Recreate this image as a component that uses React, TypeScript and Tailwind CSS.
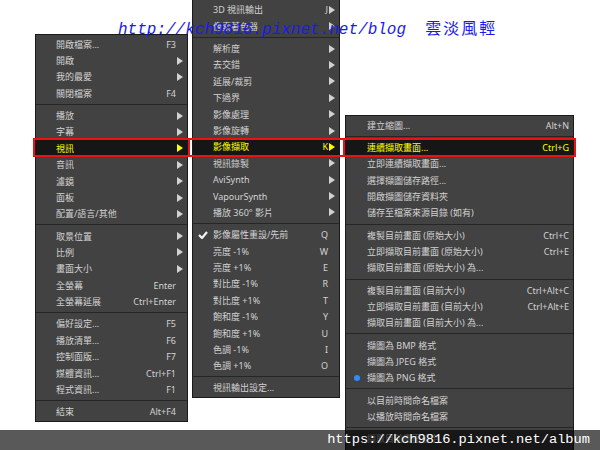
import clsx from 'clsx';

type Row =
    | { sep: true }
    | { sep?: false; label: string; sc?: string; arrow?: boolean; hl?: boolean; check?: boolean; dot?: boolean };

const leftRows: Row[] = [
    { label: '開啟檔案...', sc: 'F3' },
    { label: '開啟', arrow: true },
    { label: '我的最愛', arrow: true },
    { label: '關閉檔案', sc: 'F4' },
    { sep: true },
    { label: '播放', arrow: true },
    { label: '字幕', arrow: true },
    { label: '視訊', arrow: true, hl: true },
    { label: '音訊', arrow: true },
    { label: '濾鏡', arrow: true },
    { label: '面板', arrow: true },
    { label: '配置/語言/其他', arrow: true },
    { sep: true },
    { label: '取景位置', arrow: true },
    { label: '比例', arrow: true },
    { label: '畫面大小', arrow: true },
    { label: '全螢幕', sc: 'Enter' },
    { label: '全螢幕延展', sc: 'Ctrl+Enter' },
    { sep: true },
    { label: '偏好設定...', sc: 'F5' },
    { label: '播放清單...', sc: 'F6' },
    { label: '控制面版...', sc: 'F7' },
    { label: '媒體資訊...', sc: 'Ctrl+F1' },
    { label: '程式資訊...', sc: 'F1' },
    { sep: true },
    { label: '結束', sc: 'Alt+F4' },
];

const midRows: Row[] = [
    { label: '3D 視訊輸出', sc: 'J', arrow: true },
    { label: '像素著色器', arrow: true },
    { sep: true },
    { label: '解析度', arrow: true },
    { label: '去交錯', arrow: true },
    { label: '延展/裁剪', arrow: true },
    { label: '下過界', arrow: true },
    { label: '影像處理', arrow: true },
    { label: '影像旋轉', arrow: true },
    { label: '影像擷取', sc: 'K', arrow: true, hl: true },
    { label: '視訊錄製', arrow: true },
    { label: 'AviSynth', arrow: true },
    { label: 'VapourSynth', arrow: true },
    { label: '播放 360° 影片', arrow: true },
    { sep: true },
    { label: '影像屬性重設/先前', sc: 'Q', check: true },
    { label: '亮度 -1%', sc: 'W' },
    { label: '亮度 +1%', sc: 'E' },
    { label: '對比度 -1%', sc: 'R' },
    { label: '對比度 +1%', sc: 'T' },
    { label: '飽和度 -1%', sc: 'Y' },
    { label: '飽和度 +1%', sc: 'U' },
    { label: '色調 -1%', sc: 'I' },
    { label: '色調 +1%', sc: 'O' },
    { sep: true },
    { label: '視訊輸出設定...' },
];

const rightRows: Row[] = [
    { label: '建立縮圖...', sc: 'Alt+N' },
    { sep: true },
    { label: '連續擷取畫面...', sc: 'Ctrl+G', hl: true },
    { label: '立即連續擷取畫面...' },
    { label: '選擇擷圖儲存路徑...' },
    { label: '開啟擷圖儲存資料夾' },
    { label: '儲存至檔案來源目錄 (如有)' },
    { sep: true },
    { label: '複製目前畫面 (原始大小)', sc: 'Ctrl+C' },
    { label: '立即擷取目前畫面 (原始大小)', sc: 'Ctrl+E' },
    { label: '擷取目前畫面 (原始大小) 為...' },
    { sep: true },
    { label: '複製目前畫面 (目前大小)', sc: 'Ctrl+Alt+C' },
    { label: '立即擷取目前畫面 (目前大小)', sc: 'Ctrl+Alt+E' },
    { label: '擷取目前畫面 (目前大小) 為...' },
    { sep: true },
    { label: '擷圖為 BMP 格式' },
    { label: '擷圖為 JPEG 格式' },
    { label: '擷圖為 PNG 格式', dot: true },
    { sep: true },
    { label: '以目前時間命名檔案' },
    { label: '以播放時間命名檔案' },
    { sep: true },
    { label: '擷取目前畫面設定...' },
    { label: '擷圖格式與品質...' },
];

const Arrow = () => (
    <svg width="6" height="8" viewBox="0 0 6 8">
        <path d="M0 0L6 4L0 8Z" fill="currentColor" />
    </svg>
);

const Menu = ({ rows, arrows, className, leftCol }: { rows: Row[]; arrows: boolean; className: string; leftCol: string }) => (
    <div className={clsx('shrink-0 bg-[#424242] border border-[#1b1b1b] py-[1px]', className)}>
        {rows.map((r, i) =>
            r.sep ? (
                <div key={i} className="h-[5.8px] flex items-center">
                    <div className="w-full h-px bg-[#262626]" />
                </div>
            ) : (
                <div
                    key={i}
                    className={clsx(
                        'flex items-center h-[16.4px] leading-none whitespace-nowrap',
                        r.hl ? 'bg-[#161616] text-[#ffff00]' : 'text-[#d2d2d2]'
                    )}
                >
                    <span className={clsx('flex justify-center items-center', leftCol)}>
                        {r.check && (
                            <svg width="10" height="8" viewBox="0 0 10 8">
                                <path d="M1 4l3 3 5-6" stroke="#f2f2f2" strokeWidth="2.2" fill="none" />
                            </svg>
                        )}
                        {r.dot && <span className="w-[6px] h-[6px] rounded-full bg-[#2f8cff]" />}
                    </span>
                    <span className="flex-1">{r.label}</span>
                    {r.sc && <span>{r.sc}</span>}
                    {arrows ? (
                        <span className="w-[11px] flex items-center pl-[1px]">{r.arrow && <Arrow />}</span>
                    ) : (
                        <span className="w-[4px]" />
                    )}
                </div>
            )
        )}
    </div>
);

export default function App() {
    return (
        <div className="relative w-[600px] h-[450px] overflow-hidden bg-white font-['Noto_Sans','Noto_Sans_CJK_TC',sans-serif] text-[9px]">
            <div className="flex items-start pl-[35px]">
                <Menu rows={leftRows} arrows className="w-[153px] mt-[34px]" leftCol="w-[20px]" />
                <Menu rows={midRows} arrows className="w-[148px] ml-[4px] border-t-0 pt-[1.8px]" leftCol="w-[20px]" />
                <Menu rows={rightRows} arrows={false} className="w-[229px] ml-[5px] mt-[115px]" leftCol="w-[21px]" />
            </div>

            {/* red highlight outline */}
            <div className="absolute left-[33px] top-[138px] w-[543px] h-[19px] border-2 border-[#ee1111]" />
            <div className="absolute left-[188px] top-[138px] w-[2px] h-[19px] bg-[#ee1111]" />
            <div className="absolute left-[343px] top-[138px] w-[2px] h-[19px] bg-[#ee1111]" />

            {/* watermark top */}
            <div className="absolute left-[118px] top-[17px] whitespace-pre text-[16px] leading-[20px] text-[#1a1aee]">
                <span className="italic font-['Liberation_Mono',monospace]">http://kch9816.pixnet.net/blog  </span>
                <span className="font-['Noto_Sans_CJK_TC',serif] tracking-[2px]">雲淡風輕</span>
            </div>

            {/* watermark bottom */}
            <div className="absolute left-0 right-0 top-[430px] h-[20px] bg-black/65 flex items-center justify-end pr-[10px]">
                <span className="font-['Liberation_Mono',monospace] text-[13.7px] text-white leading-none">https://kch9816.pixnet.net/album</span>
            </div>
        </div>
    );
}
